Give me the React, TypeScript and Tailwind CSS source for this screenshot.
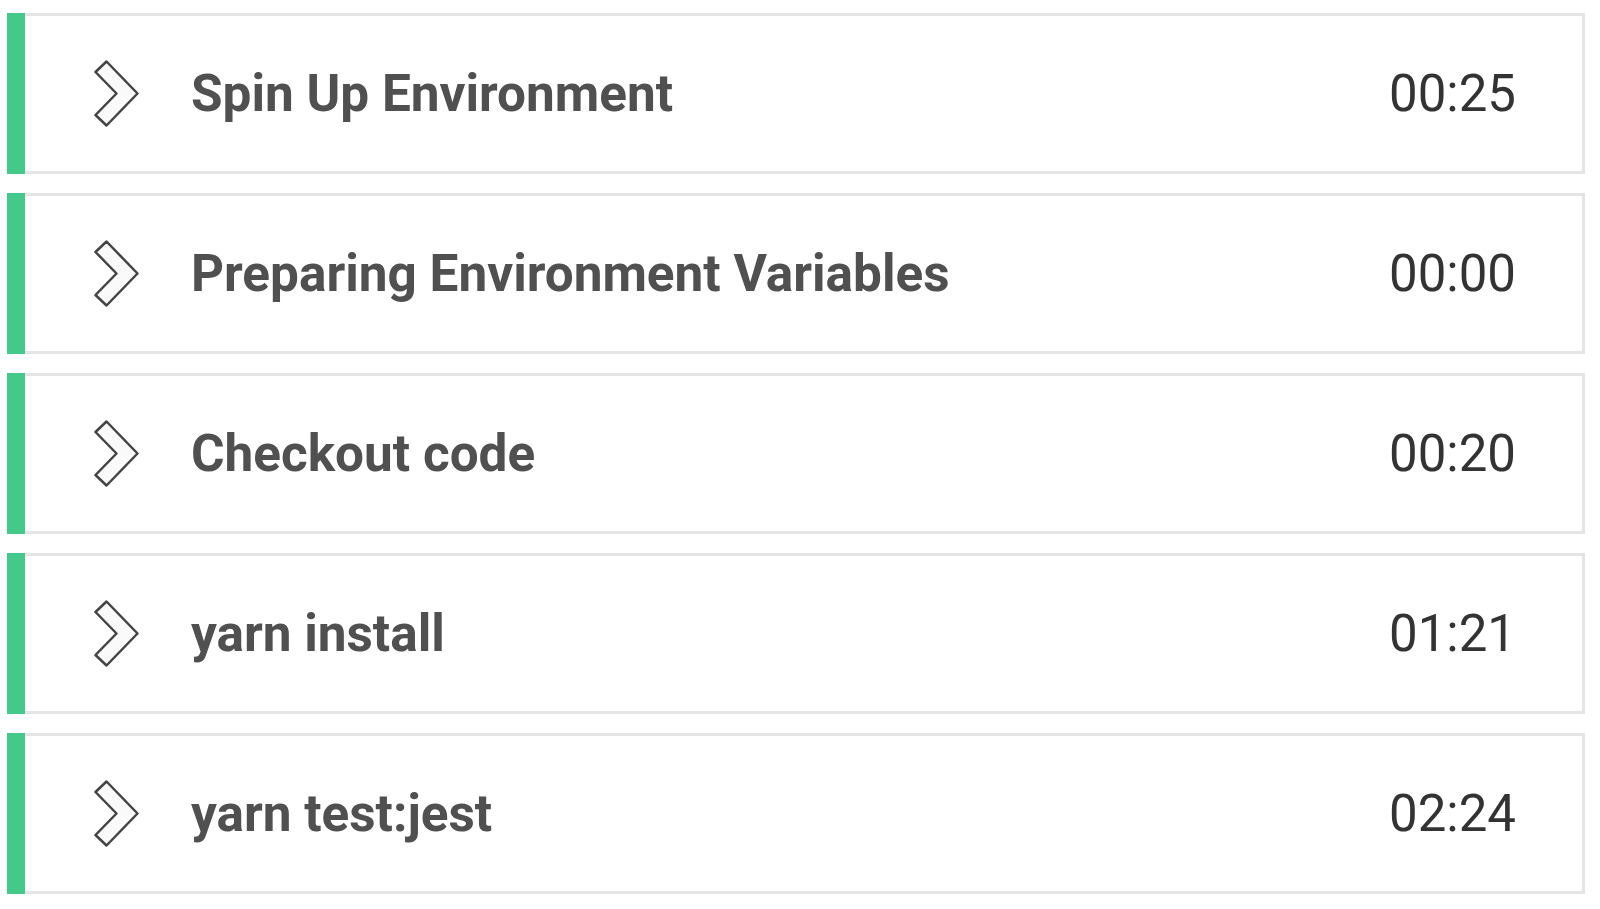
const steps = [
  { name: 'Spin Up Environment', time: '00:25' },
  { name: 'Preparing Environment Variables', time: '00:00' },
  { name: 'Checkout code', time: '00:20' },
  { name: 'yarn install', time: '01:21' },
  { name: 'yarn test:jest', time: '02:24' },
]

function Chevron() {
  return (
    <svg width="45" height="67" viewBox="0 0 45 67" className="shrink-0" aria-hidden="true">
      <path
        d="M1.5 12 L12.5 1.5 L43.5 33.5 L12.5 65.5 L1.5 55 L22.5 33.5 Z"
        fill="#fafafa"
        stroke="#444444"
        strokeWidth="2.5"
        strokeLinejoin="round"
      />
    </svg>
  )
}

function StepRow({ name, time }: { name: string; time: string }) {
  return (
    <div className="flex h-[161px]">
      <div className="w-[18px] shrink-0 bg-[#45c98a]" />
      <div className="flex flex-1 items-center border-y-[3px] border-r-[3px] border-[#e5e5e5] bg-white pl-[69px] pr-[66px]">
        <Chevron />
        <div className="ml-[52px] flex-1 text-[51.3px] font-bold leading-none text-[#505050]">{name}</div>
        <div className="text-[51px] leading-none text-[#333333]">{time}</div>
      </div>
    </div>
  )
}

export default function App() {
  return (
    <div
      className="flex h-[909px] w-[1600px] flex-col gap-[19px] bg-white pl-[7px] pr-[15px] pt-[13px]"
      style={{ fontFamily: 'Roboto, "Liberation Sans", sans-serif' }}
    >
      {steps.map((s) => (
        <StepRow key={s.name} name={s.name} time={s.time} />
      ))}
    </div>
  )
}
